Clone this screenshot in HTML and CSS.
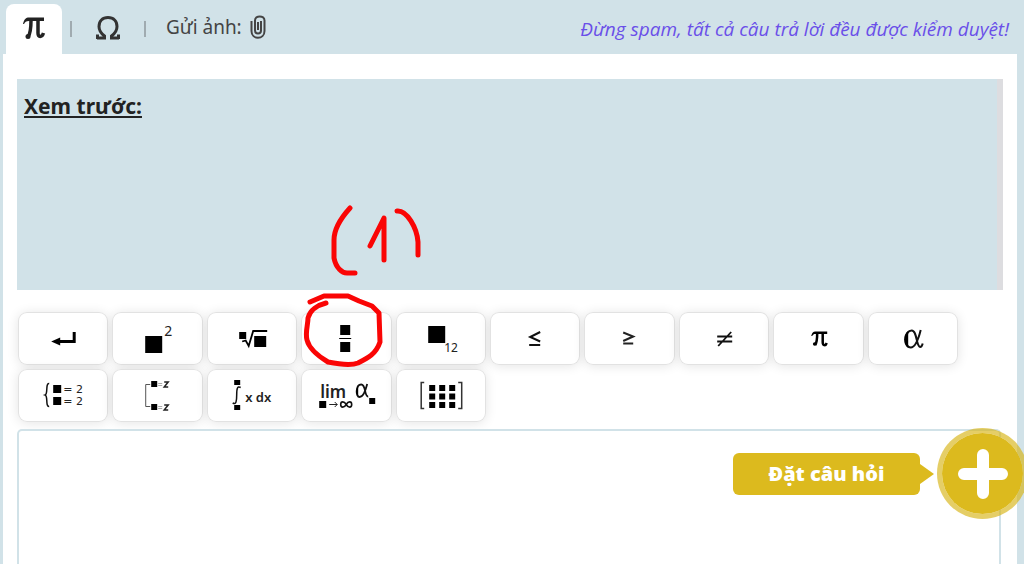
FILE: index.html
```html
<!DOCTYPE html>
<html lang="vi">
<head>
    <meta charset="UTF-8">
    <meta name="viewport" content="width=device-width, initial-scale=1.0">
    <title>Trả lời câu hỏi</title>
    <link rel="stylesheet" href="styles.css">
</head>
<body>
    <!-- Tabs -->
    <header class="toolbar">
        <nav class="tabs">
            <button class="tab active" type="button" aria-label="Công thức">
                <svg width="24" height="26" viewBox="0 0 24 26">
                    <path d="M1 8C2 3 4 1.500 7 1.500H22V5H7C4 5 3 6 2 8Z" fill="#222"/>
                    <path d="M9 4C9 11 9 17 6 21M16 4V17C16 21.500 20 21.500 21.500 17" fill="none" stroke="#222" stroke-width="3.500"/>
                    <circle cx="6" cy="20.500" r="2.500" fill="#222"/>
                </svg>
            </button>
            <span class="divider"></span>
            <button class="tab" type="button" aria-label="Ký hiệu">
                <svg width="24" height="26" viewBox="0 0 24 26">
                    <path d="M1 22H8.500V20C4.500 17 3 14 3 10.500C3 5 6.500 1.500 12 1.500S21 5 21 10.500C21 14 19.500 17 15.500 20V22H23M1.500 23V18.500M22.500 23V18.500" fill="none" stroke="#333" stroke-width="3"/>
                </svg>
            </button>
            <span class="divider"></span>
            <button class="attach" type="button">
                Gửi ảnh:
                <svg width="16" height="24" viewBox="0 0 16 24">
                    <path d="M1.500 6V16C1.500 25 14.500 25 14.500 16V5.500C14.500 0 5 0 5 5.500V15.500C5 19.500 11 19.500 11 15.500V6M8 7V15" fill="none" stroke="#444" stroke-width="2"/>
                </svg>
            </button>
        </nav>
        <p class="notice">Đừng spam, tất cả câu trả lời đều được kiểm duyệt!</p>
    </header>

    <main class="panel">
        <section class="preview">
            <h2>Xem trước:</h2>
        </section>

        <!-- Formula buttons -->
        <div class="keys">
            <button class="key" type="button" aria-label="Xuống dòng">
                <svg viewBox="0 0 90 53">
                    <path d="M56 20V29.500H40" fill="none" stroke="#000" stroke-width="3"/>
                    <path d="M33 29.500L42 25.500V33.500Z"/>
                </svg>
            </button>
            <button class="key" type="button" aria-label="Lũy thừa">
                <svg viewBox="0 0 90 53">
                    <rect x="33" y="24" width="17" height="17"/>
                    <text x="52" y="24" font-size="14">2</text>
                </svg>
            </button>
            <button class="key" type="button" aria-label="Căn">
                <svg viewBox="0 0 90 53">
                    <rect x="32" y="20" width="7" height="7"/>
                    <path d="M35 29.500L38.500 28.500L41.500 34L46 19H60" fill="none" stroke="#000" stroke-width="1.800"/>
                    <rect x="47" y="24" width="12" height="11"/>
                </svg>
            </button>
            <button class="key" type="button" aria-label="Phân số">
                <svg viewBox="0 0 90 53">
                    <rect x="39" y="13" width="10" height="10"/>
                    <rect x="38" y="26" width="12" height="1"/>
                    <rect x="39" y="30" width="10" height="10"/>
                </svg>
            </button>
            <button class="key" type="button" aria-label="Chỉ số dưới">
                <svg viewBox="0 0 90 53">
                    <rect x="32" y="14" width="17" height="17"/>
                    <text x="48" y="40" font-size="12">12</text>
                </svg>
            </button>
            <button class="key" type="button" aria-label="Nhỏ hơn hoặc bằng">
                <svg viewBox="0 0 90 53">
                    <path d="M50 20L40 25L50 29.500M39 33H50" fill="none" stroke="#111" stroke-width="2"/>
                </svg>
            </button>
            <button class="key" type="button" aria-label="Lớn hơn hoặc bằng">
                <svg viewBox="0 0 90 53">
                    <path d="M39 20.500L49 24.500L39 29M39 31.500H49" fill="none" stroke="#222" stroke-width="2"/>
                </svg>
            </button>
            <button class="key" type="button" aria-label="Khác">
                <svg viewBox="0 0 90 53">
                    <path d="M38 24.500H53M38 29.500H53M39 34L52 20" fill="none" stroke="#111" stroke-width="1.800"/>
                </svg>
            </button>
            <button class="key" type="button" aria-label="Pi">
                <svg viewBox="0 0 90 53">
                    <path d="M38 24C39 20.500 40 19.500 42 19.500H54V22H42C40.500 22 40 22.500 39 24Z"/>
                    <path d="M44 21C44 26 44 30 42 33M49.500 21V30C49.500 34 52.500 34 53.500 31" fill="none" stroke="#000" stroke-width="2.500"/>
                    <circle cx="41.500" cy="32" r="1.800"/>
                </svg>
            </button>
            <button class="key" type="button" aria-label="Alpha">
                <svg viewBox="0 0 90 53">
                    <path d="M52.500 18C50 28 47 35.500 42.500 35.500C39.500 35.500 38 32 38 27.500C38 22 40 18.500 43.500 18.500C49 18.500 48 35 52 35C53.500 35 54 33.500 54.500 31.500" fill="none" stroke="#111" stroke-width="2"/>
                    <path d="M40 19C34.500 22 34.500 33 40 36Z"/>
                </svg>
            </button>
            <button class="key" type="button" aria-label="Hệ phương trình">
                <svg viewBox="0 0 90 53">
                    <path d="M31 14.500C27 14 30 25 27 26C30 27 27 38 31 37.500" fill="none" stroke="#111" stroke-width="1.500"/>
                    <rect x="35" y="16" width="8" height="8"/>
                    <rect x="35" y="28" width="8" height="8"/>
                    <text class="wide" x="45" y="24" font-size="11">= 2</text>
                    <text class="wide" x="45" y="36" font-size="11">= 2</text>
                </svg>
            </button>
            <button class="key" type="button" aria-label="Hoặc">
                <svg viewBox="0 0 90 53">
                    <path d="M38 15.500H33.500V37.500H38" fill="none" stroke="#555" stroke-width="1"/>
                    <rect x="39" y="12" width="6" height="6"/>
                    <rect x="39" y="35" width="6" height="6"/>
                    <path d="M46 14.500H50M46 16.500H50M46 37.500H50M46 39.500H50" stroke="#aaa" stroke-width="1"/>
                    <path d="M52 13H56L52 18H56M52 36H56L52 41H56" fill="none" stroke="#222" stroke-width="1.500"/>
                </svg>
            </button>
            <button class="key" type="button" aria-label="Tích phân">
                <svg viewBox="0 0 90 53">
                    <rect x="27" y="11" width="6" height="5"/>
                    <rect x="27" y="36" width="6" height="5"/>
                    <path d="M33.500 18.500C30 16.500 29.500 20 29.500 26S29 36 25.500 34" fill="none" stroke="#111" stroke-width="1.500"/>
                    <text class="medium" x="38" y="33" font-size="13">x dx</text>
                </svg>
            </button>
            <button class="key" type="button" aria-label="Giới hạn">
                <svg viewBox="0 0 90 53">
                    <text class="medium" x="19" y="29" font-size="17">lim</text>
                    <rect x="18" y="32" width="7" height="7"/>
                    <path d="M28 35.500H36M33.500 33L36 35.500L33.500 38" fill="none" stroke="#222" stroke-width="1"/>
                    <path d="M45 35.500C43 32 39.500 32 39.500 35.500S43 39 45 35.500S50.500 32 50.500 35.500S47 39 45 35.500Z" fill="none" stroke="#111" stroke-width="1.600"/>
                    <path d="M66 15C64 23 61 28 58.500 28C54 28 54.500 15.500 60 15.500C65 15.500 63 28 67 27.500" fill="none" stroke="#111" stroke-width="1.800"/>
                    <path d="M57 17C54 20 54 25 57 27Z"/>
                    <rect x="68" y="29" width="6" height="6"/>
                </svg>
            </button>
            <button class="key" type="button" aria-label="Ma trận">
                <svg viewBox="0 0 90 53">
                    <path d="M28 13.500H25V39.500H28M62 13.500H65.500V39.500H62" fill="none" stroke="#333" stroke-width="1.500"/>
                    <path d="M33 19H39M43 19H49M53 19H59M33 27.500H39M43 27.500H49M53 27.500H59M33 36H39M43 36H49M53 36H59" stroke="#000" stroke-width="6"/>
                </svg>
            </button>
        </div>

        <textarea class="answer" aria-label="Câu trả lời"></textarea>
    </main>

    <!-- Red pen marks over the preview and the fraction key -->
    <svg class="marks" width="130" height="180" viewBox="300 200 130 180" aria-hidden="true">
        <path d="M350 208C340 219 334 229 334 240V258C336 268 342 273 347 273L355 273"/>
        <path d="M370 246L384 218V260"/>
        <path d="M397 211C407 210 417 228 418 242V255"/>
        <path d="M310 302L324 296H348L359 301L372 306L379 313L380 342C376 354 368 358 358 363C350 366 338 364 328 362C318 356 309 348 307 340C305 332 308 325 308 318C310 310 318 305 326 303"/>
    </svg>

    <div class="ask">
        <a class="ask-label" href="#">Đặt câu hỏi</a>
        <button class="ask-btn" type="button" aria-label="Thêm câu hỏi">
            <svg width="52" height="52" viewBox="0 0 52 52">
                <path d="M26 7V45M7 26H45" stroke="#fff" stroke-width="12" stroke-linecap="round"/>
            </svg>
        </button>
    </div>
</body>
</html>
```

FILE: styles.css
```css
* {
    margin: 0;
    padding: 0;
    box-sizing: border-box;
}

body {
    font-family: 'Noto Sans', 'Open Sans', sans-serif;
    background: #d1e2e8;
    color: #222;
    height: 100vh;
    display: flex;
    flex-direction: column;
    overflow: hidden;
    position: relative;
}

button {
    font-family: inherit;
    background: none;
    border: none;
    cursor: pointer;
}

.toolbar {
    display: flex;
    justify-content: space-between;
    padding: 4px 15px 0 6px;
}

.tabs {
    display: flex;
    align-items: center;
}

.tab {
    width: 56px;
    height: 50px;
    display: flex;
    align-items: center;
    justify-content: center;
    border-radius: 8px 8px 0 0;
}

.tab.active {
    background: #fff;
}

.divider {
    width: 2px;
    height: 16px;
    margin: 0 8px;
    background: #a0abb0;
}

.attach {
    display: flex;
    align-items: center;
    gap: 8px;
    margin-left: 12px;
    padding-bottom: 4px;
    font-size: 19px;
    color: #444;
}

.notice {
    font-family: 'Open Sans', 'Noto Sans', sans-serif;
    font-size: 19px;
    line-height: 50px;
    font-style: italic;
    color: #6a4fe8;
}

.panel {
    flex: 1;
    display: flex;
    flex-direction: column;
    margin: 0 7px 0 3px;
    padding: 25px 14px 0;
    background: #fff;
}

.preview {
    height: 211px;
    flex: none;
    padding: 12px 7px;
    background: #d1e2e8;
    border-right: 6px solid #dddde0;
}

.preview h2 {
    font-size: 21px;
    line-height: 30px;
    font-weight: 700;
    text-decoration: underline;
}

.keys {
    display: grid;
    grid-template-columns: repeat(10, minmax(0, 1fr));
    gap: 4px;
    padding: 22px 45px 7px 1px;
}

.key {
    height: 53px;
    background: #fff;
    border-radius: 9px;
    box-shadow: inset 0 0 0 1px #e2e2e2, 0 1px 12px rgba(0, 0, 0, 0.11);
}

.key svg {
    display: block;
    width: 100%;
    height: 53px;
}

.key text {
    fill: #222;
}

.key .wide {
    font-family: 'DejaVu Sans', sans-serif;
}

.key .medium {
    font-weight: 600;
}

.answer {
    flex: 1;
    margin-right: 2px;
    padding: 10px;
    border: 2px solid #d1e2e8;
    border-bottom: none;
    border-radius: 5px 5px 0 0;
    font-family: inherit;
    font-size: 16px;
    resize: none;
    outline: none;
}

.marks {
    position: absolute;
    left: 300px;
    top: 200px;
    pointer-events: none;
}

.marks path {
    fill: none;
    stroke: #fa0505;
    stroke-width: 5;
    stroke-linecap: round;
    stroke-linejoin: round;
}

.ask {
    position: absolute;
    right: -4px;
    bottom: 45px;
    display: flex;
    align-items: center;
    gap: 17px;
}

.ask-label {
    position: relative;
    width: 187px;
    border-radius: 6px;
    background: #dcba1e;
    color: #fff;
    font-family: 'Open Sans', 'Noto Sans', sans-serif;
    font-size: 20px;
    line-height: 42px;
    font-weight: 800;
    text-align: center;
    text-decoration: none;
}

/* arrow pointing at the round button */
.ask-label::after {
    content: '';
    position: absolute;
    left: 100%;
    top: 11px;
    border: 10px solid transparent;
    border-left: 14px solid #dcba1e;
    border-right: none;
}

.ask-btn {
    width: 91px;
    height: 91px;
    display: flex;
    align-items: center;
    justify-content: center;
    border: 5px solid rgba(215, 180, 20, 0.65);
    border-radius: 50%;
    background: #dcba1e;
    background-clip: padding-box;
}
```
